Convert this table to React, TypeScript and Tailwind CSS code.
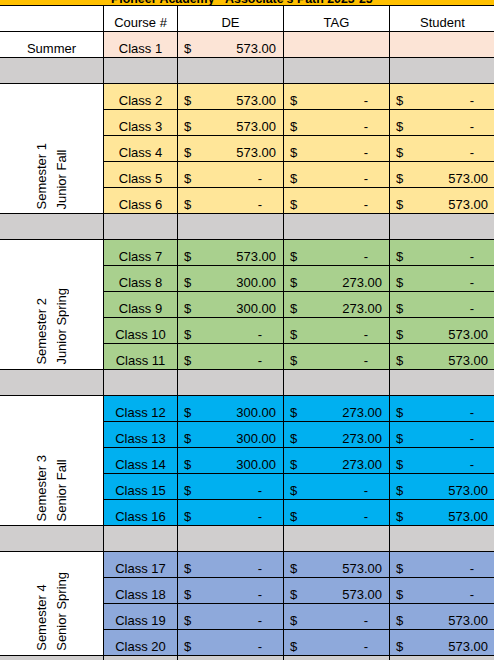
import React from "react";

type Row = { cls: string; de: string | null; tag: string | null; st: string | null };

const sem1: Row[] = [
  { cls: "Class 2", de: "573.00", tag: "-", st: "-" },
  { cls: "Class 3", de: "573.00", tag: "-", st: "-" },
  { cls: "Class 4", de: "573.00", tag: "-", st: "-" },
  { cls: "Class 5", de: "-", tag: "-", st: "573.00" },
  { cls: "Class 6", de: "-", tag: "-", st: "573.00" },
];
const sem2: Row[] = [
  { cls: "Class 7", de: "573.00", tag: "-", st: "-" },
  { cls: "Class 8", de: "300.00", tag: "273.00", st: "-" },
  { cls: "Class 9", de: "300.00", tag: "273.00", st: "-" },
  { cls: "Class 10", de: "-", tag: "-", st: "573.00" },
  { cls: "Class 11", de: "-", tag: "-", st: "573.00" },
];
const sem3: Row[] = [
  { cls: "Class 12", de: "300.00", tag: "273.00", st: "-" },
  { cls: "Class 13", de: "300.00", tag: "273.00", st: "-" },
  { cls: "Class 14", de: "300.00", tag: "273.00", st: "-" },
  { cls: "Class 15", de: "-", tag: "-", st: "573.00" },
  { cls: "Class 16", de: "-", tag: "-", st: "573.00" },
];
const sem4: Row[] = [
  { cls: "Class 17", de: "-", tag: "573.00", st: "-" },
  { cls: "Class 18", de: "-", tag: "573.00", st: "-" },
  { cls: "Class 19", de: "-", tag: "-", st: "573.00" },
  { cls: "Class 20", de: "-", tag: "-", st: "573.00" },
];

const cellBase = "border-r border-b border-black flex items-end pb-[2px] leading-[13px]";

function TextCell({ children, bg }: { children?: React.ReactNode; bg: string }) {
  return <div className={`${cellBase} justify-center ${bg}`}>{children}</div>;
}

function Money({ v, bg }: { v: string | null; bg: string }) {
  if (v === null) return <div className={`${cellBase} ${bg}`} />;
  return (
    <div className={`${cellBase} justify-between pl-[6px] ${v === "-" ? "pr-[21px]" : "pr-[7px]"} ${bg}`}>
      <span>$</span>
      <span>{v}</span>
    </div>
  );
}

function GrayRow() {
  return (
    <>
      <div className={`${cellBase} bg-[#d0cece]`} />
      <div className={`${cellBase} bg-[#d0cece]`} />
      <div className={`${cellBase} bg-[#d0cece]`} />
      <div className={`${cellBase} bg-[#d0cece]`} />
      <div className={`${cellBase} bg-[#d0cece]`} />
    </>
  );
}

function Semester({ rows, bg, l1, l2, span }: { rows: Row[]; bg: string; l1: string; l2: string; span: string }) {
  return (
    <>
      <div className={`border-r border-b border-black bg-white flex items-end justify-center pb-[4px] ${span}`}>
        <div className="[writing-mode:vertical-rl] rotate-180 leading-[20px] text-left">
          <div>{l1}</div>
          <div>{l2}</div>
        </div>
      </div>
      {rows.map((r) => (
        <React.Fragment key={r.cls}>
          <div className={`${cellBase} justify-center col-start-2 ${bg}`}>{r.cls}</div>
          <Money v={r.de} bg={bg} />
          <Money v={r.tag} bg={bg} />
          <Money v={r.st} bg={bg} />
        </React.Fragment>
      ))}
    </>
  );
}

export default function App() {
  return (
    <div
      className="w-[494px] h-[660px] overflow-hidden bg-white text-black text-[13px]"
      style={{ fontFamily: '"Liberation Sans", Arial, sans-serif' }}
    >
      <div className="w-[600px]">
        <div className="h-[6px] bg-[#ffc000] border-b border-black overflow-hidden flex items-end pl-[111px]">
          <span className="font-bold text-[12.4px] leading-[12px] whitespace-nowrap">
            Pioneer Academy - Associate's Path 2023-25
          </span>
        </div>
        <div className="grid grid-cols-[104px_74px_106px_106px_106px] auto-rows-[26px]">
          <TextCell bg="bg-white" />
          <TextCell bg="bg-white">Course #</TextCell>
          <TextCell bg="bg-white">DE</TextCell>
          <TextCell bg="bg-white">TAG</TextCell>
          <TextCell bg="bg-white">Student</TextCell>
          <TextCell bg="bg-white">Summer</TextCell>
          <TextCell bg="bg-[#fce4d6]">Class 1</TextCell>
          <Money v="573.00" bg="bg-[#fce4d6]" />
          <Money v={null} bg="bg-[#fce4d6]" />
          <Money v={null} bg="bg-[#fce4d6]" />
          <GrayRow />
          <Semester rows={sem1} bg="bg-[#ffe699]" l1="Semester 1" l2="Junior Fall" span="row-span-5" />
          <GrayRow />
          <Semester rows={sem2} bg="bg-[#a9d08e]" l1="Semester 2" l2="Junior Spring" span="row-span-5" />
          <GrayRow />
          <Semester rows={sem3} bg="bg-[#00b0f0]" l1="Semester 3" l2="Senior Fall" span="row-span-5" />
          <GrayRow />
          <Semester rows={sem4} bg="bg-[#8ea9db]" l1="Semester 4" l2="Senior Spring" span="row-span-4" />
          <GrayRow />
        </div>
      </div>
    </div>
  );
}
